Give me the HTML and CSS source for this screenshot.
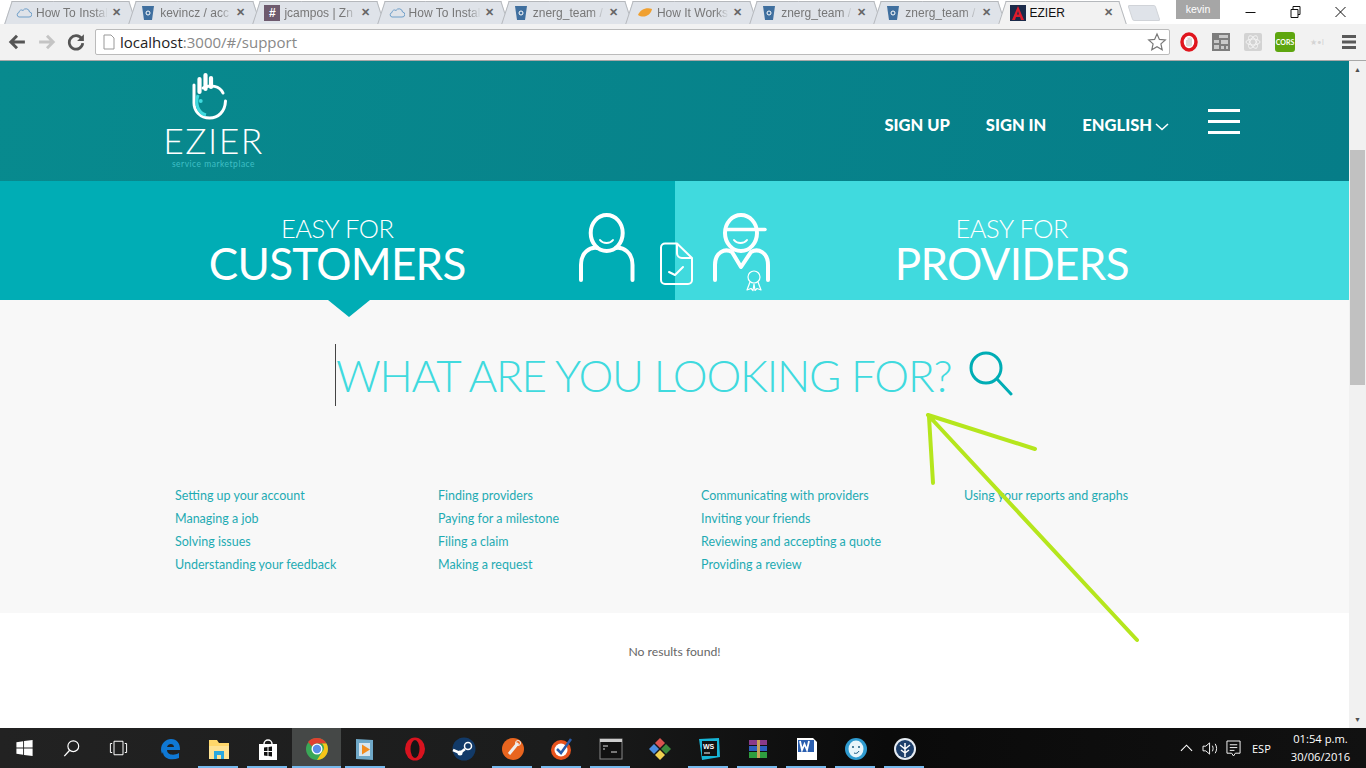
FILE: index.html
```html
<!DOCTYPE html>
<html lang="en">
<head>
    <meta charset="UTF-8">
    <title>EZIER</title>
    <link rel="stylesheet" href="styles.css">
</head>
<body>
    <div class="tabstrip">
        <div class="tab"><svg class="fav" viewBox="0 0 16 16"><path d="M3 12h10a2.5 2.5 0 0 0 .5-5A3.5 3.5 0 0 0 7 5.500 2.500 2.500 0 0 0 3 7.500 2.300 2.300 0 0 0 3 12z" fill="none" stroke="#6f9fc9"/></svg><span class="tab-title">How To Install</span><span class="tab-x">✕</span></div>
        <div class="tab"><svg class="fav" viewBox="0 0 16 16"><path d="M2 1h12l-2 14H4z" fill="#3f6f9f"/><circle cx="8" cy="8" r="2" fill="none" stroke="#fff"/></svg><span class="tab-title">kevincz / acc</span><span class="tab-x">✕</span></div>
        <div class="tab"><span class="fav fav-hash">#</span><span class="tab-title">jcampos | Zn</span><span class="tab-x">✕</span></div>
        <div class="tab"><svg class="fav" viewBox="0 0 16 16"><path d="M3 12h10a2.5 2.5 0 0 0 .5-5A3.5 3.5 0 0 0 7 5.500 2.500 2.500 0 0 0 3 7.500 2.300 2.300 0 0 0 3 12z" fill="none" stroke="#6f9fc9"/></svg><span class="tab-title">How To Install</span><span class="tab-x">✕</span></div>
        <div class="tab"><svg class="fav" viewBox="0 0 16 16"><path d="M2 1h12l-2 14H4z" fill="#3f6f9f"/><circle cx="8" cy="8" r="2" fill="none" stroke="#fff"/></svg><span class="tab-title">znerg_team /</span><span class="tab-x">✕</span></div>
        <div class="tab"><svg class="fav" viewBox="0 0 16 16"><path d="M1 10c2-5 8-8 14-6-1 6-8 10-14 6z" fill="#f0a030"/></svg><span class="tab-title">How It Works</span><span class="tab-x">✕</span></div>
        <div class="tab"><svg class="fav" viewBox="0 0 16 16"><path d="M2 1h12l-2 14H4z" fill="#3f6f9f"/><circle cx="8" cy="8" r="2" fill="none" stroke="#fff"/></svg><span class="tab-title">znerg_team /</span><span class="tab-x">✕</span></div>
        <div class="tab"><svg class="fav" viewBox="0 0 16 16"><path d="M2 1h12l-2 14H4z" fill="#3f6f9f"/><circle cx="8" cy="8" r="2" fill="none" stroke="#fff"/></svg><span class="tab-title">znerg_team /</span><span class="tab-x">✕</span></div>
        <div class="tab tab-active"><svg class="fav" viewBox="0 0 16 16"><rect width="16" height="16" fill="#1b2a4a"/><path d="M8 1l6 14h-3l-1-3H6l-1 3H2zM7 9.500h2L8 6z" fill="#dd1b2c" fill-rule="evenodd"/></svg><span class="tab-title">EZIER</span><span class="tab-x">✕</span></div>
        <div class="tab-new"></div>
        <div class="win-user">kevin</div>
        <div class="win-controls">
            <svg viewBox="0 0 12 12"><path d="M1 6.500h10" stroke="#111"/></svg>
            <svg viewBox="0 0 12 12"><path d="M1.500 3.500h7v8h-7zM3.500 3.500v-3h7v8h-2" fill="none" stroke="#111"/></svg>
            <svg viewBox="0 0 12 12"><path d="M1 1l10 10M11 1L1 11" stroke="#111"/></svg>
        </div>
    </div>

    <div class="toolbar">
        <svg class="nav-icon" viewBox="0 0 16 16"><path d="M15 8H3M8 2.500L2.500 8 8 13.500" fill="none" stroke="#555" stroke-width="2.600"/></svg>
        <svg class="nav-icon" viewBox="0 0 16 16"><path d="M1 8h12M8 2.500L13.500 8 8 13.500" fill="none" stroke="#c4c4c4" stroke-width="2.600"/></svg>
        <svg class="nav-icon" viewBox="0 0 16 16"><path d="M13 5a6 6 0 1 0 1 4" fill="none" stroke="#555" stroke-width="2.400"/><path d="M15 1v6H9z" fill="#555"/></svg>
        <div class="urlbar">
            <svg class="url-page" viewBox="0 0 12 16"><path d="M1 1h7l3 3v11H1z" fill="#fff" stroke="#999"/></svg>
            <span class="url-host">localhost</span><span class="url-rest">:3000/#/support</span>
            <svg class="url-star" viewBox="0 0 20 20"><path d="M10 2l2.400 5.400 5.900.6-4.400 3.900 1.300 5.800L10 14.700l-5.200 3 1.300-5.800L1.700 8l5.900-.6z" fill="#fff" stroke="#777" stroke-width="1.200"/></svg>
        </div>
        <div class="extensions">
            <svg viewBox="0 0 20 20"><ellipse cx="10" cy="10" rx="7" ry="8" fill="#fff" stroke="#e0161e" stroke-width="3.500"/><path d="M7 8v5c0 2 6 2 6 0V6l-1.500 1V4.500L10 6 8.500 5v3z" fill="#d8d8d8"/></svg>
            <svg viewBox="0 0 20 20"><path d="M1 1h18v18H1z" fill="#7d7d7d"/><path d="M8 3h9v3H8zM3 8h5v3H3zM10 8h7v4h-7zM3 13h5v4H3zM10 14h3v3h-3zM15 14h2v3h-2z" fill="#c9c9c9"/></svg>
            <svg viewBox="0 0 20 20"><rect x="1" y="1" width="18" height="18" rx="2" fill="#d3d3d3"/><g fill="none" stroke="#f2f2f2"><ellipse cx="10" cy="10" rx="7" ry="3"/><ellipse cx="10" cy="10" rx="7" ry="3" transform="rotate(60 10 10)"/><ellipse cx="10" cy="10" rx="7" ry="3" transform="rotate(120 10 10)"/></g></svg>
            <span class="ext-cors">CORS</span>
            <span class="ext-star">★•I</span>
            <svg viewBox="0 0 20 20"><path d="M3 3h14v3H3zM3 8.500h14v3H3zM3 14h14v3H3z" fill="#5a5a5a"/></svg>
        </div>
    </div>

    <div class="viewport">
        <div class="page">
            <header class="site-header">
                <div class="logo">
                    <svg class="logo-mark" viewBox="0 0 36 48">
                        <path d="M11 16C18 12 28 14 31 21" fill="none" stroke="#fff" stroke-width="3" stroke-linecap="round"/>
                        <path d="M33.500 29C33 40 26 46 17.700 46 8 46 2 39 2 31V13" fill="none" stroke="#fff" stroke-width="3" stroke-linecap="round"/>
                        <path d="M7.500 20V7M13.500 17V3M19 15V6" stroke="#fff" stroke-width="4.200" stroke-linecap="round"/>
                        <path d="M6 23C3 32 6 41 14 43" fill="none" stroke="#40dade" stroke-width="3"/>
                        <circle cx="8.700" cy="29" r="2" fill="#40dade"/>
                    </svg>
                    <div class="logo-name">EZIER</div>
                    <div class="logo-tag">service marketplace</div>
                </div>
                <nav class="site-nav">
                    <a href="#">SIGN UP</a>
                    <a href="#">SIGN IN</a>
                    <a href="#" class="nav-lang">ENGLISH<svg viewBox="0 0 14 8"><path d="M1 1l6 5.500L13 1" fill="none" stroke="#fff" stroke-width="1.600"/></svg></a>
                    <div class="hamburger"><i></i><i></i><i></i></div>
                </nav>
            </header>

            <section class="hero">
                <div class="hero-side hero-customers">
                    <div class="hero-small">EASY FOR</div>
                    <div class="hero-big">CUSTOMERS</div>
                </div>
                <div class="hero-side hero-providers">
                    <div class="hero-small">EASY FOR</div>
                    <div class="hero-big">PROVIDERS</div>
                </div>
                <svg class="hero-icons" viewBox="0 0 240 110">
                    <g fill="none" stroke="#fff" stroke-width="4" stroke-linecap="round" stroke-linejoin="round">
                        <ellipse cx="46.700" cy="43" rx="16" ry="18"/>
                        <path d="M21 90V75C21 62 30 57 37 58M72.500 90V75C72.500 62 63 57 56 58"/>
                        <path d="M40 50C43 54 50 54 53 50" stroke-width="2"/>
                        <ellipse cx="181" cy="43" rx="16" ry="18"/>
                        <path d="M166 39.500H205" stroke-width="3.500"/>
                        <path d="M155 90V75C155 62 165 58 172 62L181 77 191 62C198 58 208 62 208 75V90"/>
                        <path d="M174 50C177 54 184 54 187 50" stroke-width="2"/>
                    </g>
                    <g fill="none" stroke="#fff" stroke-width="2" stroke-linejoin="round" stroke-linecap="round">
                        <path d="M117 53.500H105a4 4 0 0 0-4 4V90a4 4 0 0 0 4 4H128a4 4 0 0 0 4-4V68zM117 54V63a5 5 0 0 0 5 5H132"/>
                        <path d="M109 82L115 85 123 77"/>
                    </g>
                    <g stroke="#fff" stroke-width="1.200" stroke-linejoin="round">
                        <circle cx="194" cy="87" r="6" fill="#40dade"/>
                        <path d="M190 92L187 100 191 98.500 193 100.500 194 94 195 100.500 197 98.500 201 100 198 92" fill="none"/>
                    </g>
                </svg>
                <div class="hero-notch"></div>
            </section>

            <section class="search-area">
                <div class="search-row">
                    <div class="search-text">WHAT ARE YOU LOOKING FOR?</div>
                    <svg class="search-icon" viewBox="0 0 44 46"><circle cx="17" cy="17" r="15" fill="none" stroke="#00adb5" stroke-width="3"/><path d="M28 28l14 15" stroke="#00adb5" stroke-width="3" stroke-linecap="round"/></svg>
                </div>
                <div class="help-links">
                    <a href="#">Setting up your account</a>
                    <a href="#">Finding providers</a>
                    <a href="#">Communicating with providers</a>
                    <a href="#">Using your reports and graphs</a>
                    <a href="#">Managing a job</a>
                    <a href="#">Paying for a milestone</a>
                    <a href="#">Inviting your friends</a>
                    <span></span>
                    <a href="#">Solving issues</a>
                    <a href="#">Filing a claim</a>
                    <a href="#">Reviewing and accepting a quote</a>
                    <span></span>
                    <a href="#">Understanding your feedback</a>
                    <a href="#">Making a request</a>
                    <a href="#">Providing a review</a>
                </div>
            </section>

            <section class="results">No results found!</section>
        </div>
        <div class="scrollbar">
            <div class="scroll-btn">▲</div>
            <div class="scroll-track"><div class="scroll-thumb"></div></div>
            <div class="scroll-btn">▼</div>
        </div>
        <svg class="scribble" viewBox="0 0 1366 667">
            <path d="M1137 579L928 354M928 354l107 34M929 356l4 66" fill="none" stroke="#b5e61d" stroke-width="4" stroke-linecap="round"/>
        </svg>
    </div>

    <footer class="taskbar">
        <div class="task-sys">
            <svg viewBox="0 0 20 20"><path d="M1 3.500l7.500-1v7H1zM9.500 2.300L19 1v8.500H9.500zM1 10.500h7.500v7L1 16.500zM9.500 10.500H19V19l-9.500-1.300z" fill="#fff"/></svg>
            <svg viewBox="0 0 20 20"><circle cx="12" cy="8" r="6" fill="none" stroke="#fff" stroke-width="1.300"/><path d="M8 12.500L2 19" stroke="#fff" stroke-width="1.500"/></svg>
            <svg viewBox="0 0 20 20"><path d="M5 2.500h10v15H5zM3 5H1v10h2M17 5h2v10h-2" fill="none" stroke="#fff" stroke-width="1.100"/></svg>
        </div>
        <div class="task-apps">
            <div class="app"><svg viewBox="0 0 24 24"><path d="M3 13C3 6 8 2 13 2c6 0 9 4 9 11H9c0 5 7 6 12 3v5c-7 3-16 1-16-6-1 2-1 3-2-2zm6-3h7c0-4-6-4-7 0z" fill="#0f78d4"/></svg></div>
            <div class="app app-on"><svg viewBox="0 0 24 24"><path d="M2 3h8l2 3h10v16H2z" fill="#ffd76a"/><path d="M2 9h20v13H2z" fill="#ffe394"/><path d="M7 22v-8h10v8h-3v-4h-4v4z" fill="#2aa8e0"/></svg></div>
            <div class="app app-on"><svg viewBox="0 0 24 24"><path d="M3 7h18v16H3z" fill="#fff"/><path d="M8 7a4 4 0 0 1 8 0" fill="none" stroke="#fff" stroke-width="1.500"/><path d="M8 10.500l3.500-.5v4H8zM12.500 10l3.500-.5V14h-3.500zM8 15h3.500v4L8 18.500zM12.500 15H16v4.500l-3.500-.5z" fill="#111"/></svg></div>
            <div class="app app-on app-current"><svg viewBox="0 0 24 24"><circle cx="12" cy="12" r="11" fill="#3aa757"/><path d="M12 1a11 11 0 0 1 9.500 5.500H12a5.500 5.500 0 0 0-5 3L3 5a11 11 0 0 1 9-4z" fill="#e0402f"/><path d="M21.500 6.500A11 11 0 0 1 12 23l5-8a5.500 5.500 0 0 0 0-8.500z" fill="#f7c518"/><circle cx="12" cy="12" r="5.500" fill="#fff"/><circle cx="12" cy="12" r="4.200" fill="#5a8ee8"/></svg></div>
            <div class="app app-on"><svg viewBox="0 0 24 24"><path d="M2 2l17 1v20L2 22z" fill="#6fa8c8"/><path d="M5 6h11v13H5z" fill="#d9e6ee"/><path d="M8 7.500l8 5-8 5z" fill="#f28c1e"/></svg></div>
            <div class="app"><svg viewBox="0 0 24 24"><ellipse cx="12" cy="12" rx="10" ry="11.500" fill="#d8131f"/><ellipse cx="12" cy="12" rx="4.500" ry="9" fill="#161616"/></svg></div>
            <div class="app"><svg viewBox="0 0 24 24"><circle cx="12" cy="12" r="11.500" fill="#123a68"/><circle cx="16" cy="9" r="3.500" fill="none" stroke="#fff" stroke-width="1.500"/><path d="M1 13l7 3 5-4" fill="none" stroke="#fff" stroke-width="2.500"/><circle cx="8" cy="16" r="2.500" fill="#fff"/></svg></div>
            <div class="app app-on"><svg viewBox="0 0 24 24"><circle cx="12" cy="12" r="11" fill="#e8651f"/><path d="M8 17L17 6" stroke="#eee" stroke-width="3"/><circle cx="17" cy="6" r="2.500" fill="none" stroke="#eee"/></svg></div>
            <div class="app app-on"><svg viewBox="0 0 24 24"><circle cx="11" cy="13" r="10" fill="#e8531d"/><circle cx="11" cy="13" r="6.500" fill="#fff"/><path d="M7 12l4 4 10-14" fill="none" stroke="#2a5caa" stroke-width="2.500"/></svg></div>
            <div class="app app-on"><svg viewBox="0 0 24 24"><rect x="1" y="2" width="22" height="20" fill="#111" stroke="#888"/><rect x="1" y="2" width="22" height="3" fill="#ccc"/><path d="M4 9h5M4 12h2M12 15h6" stroke="#ddd"/></svg></div>
            <div class="app"><svg viewBox="0 0 24 24"><path d="M12 1l5 5-5 5-5-5z" fill="#d9534f"/><path d="M6 7l5 5-5 5-5-5z" fill="#4a8ee0"/><path d="M18 7l5 5-5 5-5-5z" fill="#3d8a3d"/><path d="M12 13l5 5-5 5-5-5z" fill="#f0d050"/></svg></div>
            <div class="app app-on"><svg viewBox="0 0 24 24"><path d="M2 2l20-1 1 19-18 3z" fill="#17b6d8"/><rect x="5" y="4" width="15" height="15" fill="#111"/><text x="6" y="12" class="ws-text">WS</text><path d="M7 16h6" stroke="#fff"/></svg></div>
            <div class="app app-on"><svg viewBox="0 0 24 24"><path d="M3 3h18v5H3z" fill="#8a3a8a"/><path d="M3 9h18v5H3z" fill="#2d5fc0"/><path d="M3 15h18v6H3z" fill="#2e9c3f"/><path d="M11 3h3v18h-3z" fill="#c9a15a"/></svg></div>
            <div class="app app-on"><svg viewBox="0 0 24 24"><path d="M2 1h16l4 4v18H2z" fill="#fff"/><path d="M3 3h16v12H3z" fill="#2b5fb0"/><path d="M5 4l2 9 2.500-6 2.500 6 2-9" fill="none" stroke="#fff" stroke-width="1.800"/></svg></div>
            <div class="app app-on"><svg viewBox="0 0 24 24"><circle cx="12" cy="12" r="11" fill="#2f9bd0"/><ellipse cx="12" cy="12" rx="7.500" ry="8.500" fill="#e8f5fb"/><circle cx="9" cy="10" r="1" fill="#1a5a80"/><circle cx="15" cy="10" r="1" fill="#1a5a80"/><path d="M10 16c2 1 4 0 5-2" fill="none" stroke="#1a5a80"/></svg></div>
            <div class="app app-on"><svg viewBox="0 0 24 24"><circle cx="12" cy="12" r="11" fill="#e6ecf3"/><circle cx="12" cy="12" r="9" fill="#1d3f6b"/><path d="M12 20V6M12 12L7 8M12 12l5-4M12 16l-4-3M12 16l4-3" stroke="#fff" stroke-width="1.500"/></svg></div>
        </div>
        <div class="tray">
            <svg viewBox="0 0 14 8" class="tray-chev"><path d="M1 7l6-6 6 6" fill="none" stroke="#fff" stroke-width="1.200"/></svg>
            <svg viewBox="0 0 18 16" class="tray-vol"><path d="M1 5.500h3L8 2v12l-4-3.500H1zM11 5c1 2 1 4 0 6M14 3c2 3 2 7 0 10" fill="none" stroke="#fff"/></svg>
            <svg viewBox="0 0 16 18" class="tray-note"><path d="M1 1h14v13H10l-2 3-2-3H1zM4 5h8M4 8h8M4 11h5" fill="none" stroke="#fff"/></svg>
            <span class="tray-lang">ESP</span>
            <div class="tray-clock"><div>01:54 p.m.</div><div>30/06/2016</div></div>
        </div>
    </footer>
</body>
</html>
```

FILE: styles.css
```css
:root {
    --teal-dark: #00adb5;
    --teal-light: #40dade;
    --link-color: #1fabb3;
}

* {
    box-sizing: border-box;
}

html, body {
    height: 100%;
}

body {
    margin: 0;
    overflow: hidden;
    font-family: 'Lato', 'Open Sans', sans-serif;
    background: #fff;
}

a {
    text-decoration: none;
    color: inherit;
}

/* browser chrome */
.tabstrip {
    display: flex;
    align-items: flex-end;
    height: 24px;
    padding-left: 8px;
    background: #fff;
    font-family: 'Liberation Sans', sans-serif;
    position: relative;
}
.tab {
    position: relative;
    display: flex;
    align-items: center;
    flex: none;
    width: 124.200px;
    height: 23px;
    padding: 0 8px;
    font-size: 12px;
    color: #777;
    z-index: 1;
}
.tab::before,
.tab::after {
    content: '';
    position: absolute;
    top: 0;
    bottom: 0;
    width: 60%;
    background: #dfe3e9;
    border-top: 1px solid #b5b8bc;
    z-index: -1;
}
.tab::before {
    left: 0;
    border-left: 1px solid #b5b8bc;
    transform: skewX(-18deg);
}
.tab::after {
    right: 0;
    border-right: 1px solid #b5b8bc;
    transform: skewX(18deg);
}
.tab-active {
    width: 122px;
    color: #111;
    z-index: 2;
}
.tab-active::before,
.tab-active::after {
    background: #f2f2f2;
}
.fav {
    flex: none;
    width: 16px;
    height: 16px;
    margin-right: 4px;
}
.fav-hash {
    background: #6e5a6e;
    color: #fff;
    font-size: 12px;
    font-weight: 700;
    line-height: 16px;
    text-align: center;
}
.tab-title {
    flex: 1;
    min-width: 0;
    white-space: nowrap;
    overflow: hidden;
    -webkit-mask-image: linear-gradient(90deg, #000 82%, transparent);
    mask-image: linear-gradient(90deg, #000 82%, transparent);
}
.tab-active .tab-title {
    -webkit-mask-image: none;
    mask-image: none;
}
.tab-x {
    flex: none;
    width: 12px;
    margin-left: 4px;
    font-size: 11px;
    font-weight: 700;
    color: #666;
}
.tab-new {
    width: 28px;
    height: 16px;
    margin: 0 0 3px 6px;
    background: #dfe3e9;
    border: 1px solid #d0d3d8;
    border-radius: 2px;
    transform: skewX(18deg);
}
.win-user {
    position: absolute;
    left: 1176px;
    top: 0;
    width: 44px;
    height: 19px;
    background: #a6a6a6;
    color: #fff;
    font-size: 10.500px;
    text-align: center;
    line-height: 18px;
}
.win-controls {
    position: absolute;
    right: 3px;
    top: 0;
    display: flex;
    width: 135px;
    height: 24px;
}
.win-controls svg {
    flex: 1;
    height: 12px;
    margin-top: 6px;
}

.toolbar {
    display: flex;
    align-items: center;
    height: 37px;
    padding-left: 8px;
    background: #f2f2f2;
    border-bottom: 1px solid #a8a8a8;
}
.nav-icon {
    flex: none;
    width: 18px;
    height: 18px;
    margin-right: 12px;
}
.nav-icon:nth-child(2) {
    margin-right: 11px;
}
.nav-icon:nth-child(3) {
    margin-right: 10px;
}
.urlbar {
    flex: none;
    display: flex;
    align-items: center;
    width: 1075px;
    height: 26px;
    padding: 0 2px 0 7px;
    background: #fff;
    border: 1px solid #bbb;
    border-radius: 2px;
    font-family: 'Open Sans', sans-serif;
    font-size: 15px;
    color: #888;
}
.url-page {
    width: 12px;
    height: 16px;
    margin-right: 5px;
}
.url-host {
    color: #222;
}
.url-star {
    width: 20px;
    height: 20px;
    margin-left: auto;
}
.extensions {
    display: flex;
    align-items: center;
    gap: 12px;
    margin-left: 9px;
}
.extensions svg {
    width: 20px;
    height: 20px;
}
.ext-cors {
    width: 20px;
    height: 20px;
    background: #5ea60f;
    border-radius: 3px;
    color: #fff;
    font-size: 7px;
    font-weight: 700;
    line-height: 20px;
    text-align: center;
}
.ext-star {
    width: 20px;
    color: #d4d4d4;
    font-size: 8px;
    text-align: center;
}

/* page */
.viewport {
    position: relative;
    display: flex;
    height: 667px;
}
.page {
    flex: 1;
    display: flex;
    flex-direction: column;
    min-width: 0;
}
.site-header {
    display: flex;
    justify-content: space-between;
    align-items: flex-start;
    height: 120px;
    padding: 0 109px 0 165px;
    background: linear-gradient(100deg, #088a8e, #067d88);
}
.logo {
    display: flex;
    flex-direction: column;
    align-items: center;
    width: 97px;
    padding-top: 11px;
    color: #fff;
}
.logo-mark {
    width: 36px;
    height: 48px;
    margin-right: 7px;
}
.logo-name {
    margin-top: 3px;
    font-size: 35.500px;
    font-weight: 300;
    line-height: 36px;
    letter-spacing: 1.500px;
}
.logo-tag {
    font-size: 8.500px;
    line-height: 10px;
    letter-spacing: .5px;
    color: #3fbfc5;
    white-space: nowrap;
}
.site-nav {
    display: flex;
    align-items: center;
    gap: 36px;
    height: 128px;
    color: #fff;
    font-size: 16.500px;
    font-weight: 900;
}
.nav-lang {
    display: flex;
    align-items: center;
    gap: 3px;
}
.nav-lang svg {
    width: 14px;
    height: 8px;
    margin-top: 3px;
}
.hamburger {
    display: flex;
    flex-direction: column;
    gap: 8px;
    width: 32px;
    margin: -8px 0 0 3px;
}
.hamburger i {
    display: block;
    height: 3px;
    background: #fff;
}

.hero {
    position: relative;
    display: flex;
    height: 119px;
}
.hero-side {
    flex: 1;
    display: flex;
    flex-direction: column;
    align-items: center;
    padding-top: 32px;
    color: #fff;
}
.hero-customers {
    background: var(--teal-dark);
}
.hero-providers {
    background: var(--teal-light);
}
.hero-small {
    font-size: 25.500px;
    font-weight: 300;
    line-height: 30px;
    letter-spacing: -.4px;
}
.hero-big {
    font-size: 44px;
    font-weight: 400;
    line-height: 40px;
    letter-spacing: -.7px;
}
.hero-icons {
    position: absolute;
    left: 560px;
    top: 9px;
    width: 240px;
    height: 110px;
}
.hero-notch {
    position: absolute;
    left: 328px;
    top: 119px;
    width: 0;
    height: 0;
    border-left: 21px solid transparent;
    border-right: 21px solid transparent;
    border-top: 17px solid var(--teal-dark);
}

.search-area {
    height: 313px;
    padding-top: 44px;
    background: #f8f8f8;
}
.search-row {
    display: flex;
    align-items: center;
    height: 62px;
    padding-left: 335px;
}
.search-text {
    height: 62px;
    border-left: 1px solid #444;
    color: var(--teal-light);
    font-size: 44px;
    font-weight: 300;
    line-height: 62px;
    letter-spacing: -1.200px;
    white-space: nowrap;
}
.search-icon {
    width: 44px;
    height: 46px;
    margin-left: 18px;
    margin-top: -2px;
}
.help-links {
    display: grid;
    grid-template-columns: repeat(4, 263px);
    grid-auto-rows: 23px;
    margin-top: 78px;
    padding-left: 175px;
    color: var(--link-color);
    font-size: 12.500px;
    line-height: 23px;
}
.results {
    flex: 1;
    padding-top: 31px;
    text-align: center;
    color: #666;
    font-size: 12.200px;
}

.scrollbar {
    flex: none;
    display: flex;
    flex-direction: column;
    width: 17px;
    background: #f1f1f1;
}
.scroll-btn {
    height: 17px;
    color: #505050;
    font-size: 7px;
    line-height: 17px;
    text-align: center;
}
.scroll-track {
    flex: 1;
    padding: 72px 1px 0;
}
.scroll-thumb {
    height: 235px;
    background: #c1c1c1;
}
.scribble {
    position: absolute;
    left: 0;
    top: 0;
    width: 1366px;
    height: 667px;
    pointer-events: none;
}

/* windows taskbar */
.taskbar {
    display: flex;
    align-items: stretch;
    height: 40px;
    background: linear-gradient(90deg, #222, #1b1c1c 40%, #0a0a0a 65%, #111);
    color: #fff;
    font-family: 'Open Sans', sans-serif;
}
.task-sys {
    display: flex;
    align-items: center;
    width: 145px;
    padding-left: 1px;
}
.task-sys svg {
    width: 47px;
    height: 18px;
}
.task-apps {
    display: flex;
}
.app {
    position: relative;
    display: flex;
    align-items: center;
    justify-content: center;
    width: 49px;
    padding-top: 1px;
}
.app svg {
    width: 24px;
    height: 24px;
}
.app-on::after {
    content: '';
    position: absolute;
    left: 4px;
    right: 5px;
    bottom: 0;
    height: 2px;
    background: #76b9ed;
}
.app-current {
    background: #454847;
}
.app-current::after {
    left: 0;
    right: 0;
}
.ws-text {
    font-family: 'Liberation Sans', sans-serif;
    font-size: 7px;
    font-weight: 700;
    fill: #fff;
}
.tray {
    flex: 1;
    display: flex;
    align-items: center;
    padding-left: 251px;
    font-size: 11px;
}
.tray-chev {
    width: 13px;
    height: 8px;
}
.tray-vol {
    width: 17px;
    height: 15px;
    margin-left: 9px;
}
.tray-note {
    width: 15px;
    height: 17px;
    margin-left: 7px;
}
.tray-lang {
    margin-left: 11px;
}
.tray-clock {
    margin-left: 20px;
    font-size: 11.200px;
    line-height: 18px;
    text-align: center;
}
```
